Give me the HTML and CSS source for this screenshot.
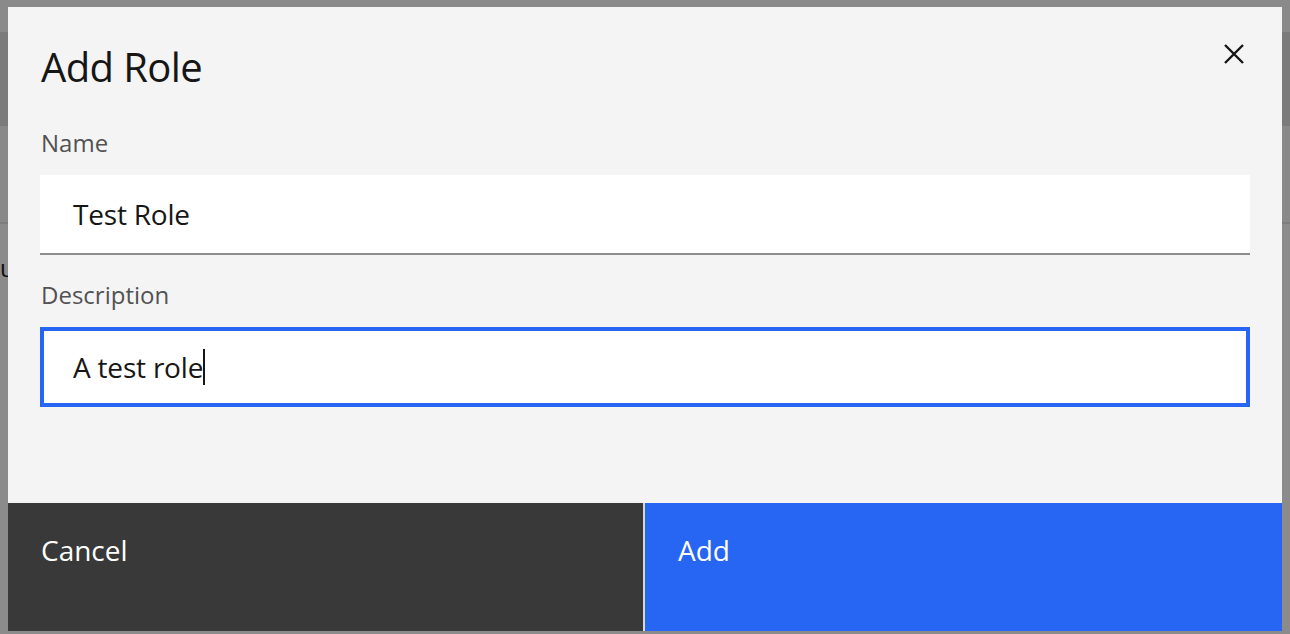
FILE: index.html
```html
<!DOCTYPE html>
<html lang="en">
<head>
<meta charset="utf-8">
<title>Add Role</title>
<link rel="stylesheet" href="styles.css">
</head>
<body>
<div class="page">
  <div class="page-top"></div>
  <div class="page-header"></div>
  <div class="page-band"></div>
  <div class="page-rule"></div>
  <div class="page-body"><span class="page-text">u</span></div>
</div>

<div class="modal" role="dialog" aria-label="Add Role">
  <div class="modal-header">
    <h2 class="modal-title">Add Role</h2>
    <button class="modal-close" aria-label="Close">
      <svg width="20" height="20" viewBox="0 0 20 20"><path d="M1 1 L19 19 M19 1 L1 19" stroke="#161616" stroke-width="2.4" fill="none"/></svg>
    </button>
  </div>
  <div class="modal-content">
    <div class="form-item">
      <label class="label">Name</label>
      <div class="field">Test Role</div>
    </div>
    <div class="form-item">
      <label class="label">Description</label>
      <div class="field field-focus">A test role<span class="caret"></span></div>
    </div>
  </div>
  <div class="modal-footer">
    <button class="btn btn-secondary">Cancel</button>
    <button class="btn btn-primary">Add</button>
  </div>
</div>
</body>
</html>
```

FILE: styles.css
```css
* { box-sizing: border-box; }
html, body { margin: 0; padding: 0; }
body {
  width: 1290px;
  height: 634px;
  overflow: hidden;
  background: #8b8b8b;
  font-family: "Open Sans", "Noto Sans", sans-serif;
  position: relative;
}
.page { display: flex; flex-direction: column; }
.page-top { height: 32px; background: #8a8a8a; }
.page-header { height: 94px; background: #7b7b7b; }
.page-band { height: 96px; background: #898989; }
.page-rule { height: 2px; background: #7d7d7d; }
.page-body { height: 390px; background: #8b8b8b; padding-top: 28px; }
.page-text { display: block; margin-left: 0; font-size: 24px; line-height: 32px; color: #0c0c0c; }

.modal {
  position: absolute;
  left: 8px;
  top: 7px;
  width: 1274px;
  height: 624px;
  background: #f4f4f4;
  display: flex;
  flex-direction: column;
}
.modal-header {
  display: flex;
  justify-content: space-between;
  align-items: flex-start;
  padding: 32px 32px 0 33px;
  margin-bottom: 32px;
}
.modal-title {
  margin: 0;
  font-size: 40px;
  line-height: 56px;
  font-weight: 400;
  color: #161616;
  letter-spacing: -0.6px;
}
.modal-close {
  border: 0;
  background: none;
  padding: 0;
  width: 20px;
  height: 20px;
  margin-top: 5px;
  margin-right: 6px;
  display: flex;
}
.modal-content { padding: 0 32px; }
.form-item { display: flex; flex-direction: column; margin-bottom: 24px; }
.label {
  font-size: 24px;
  line-height: 32px;
  color: #525252;
  letter-spacing: 0;
  margin: 0 0 16px 1px;
}
.field {
  height: 80px;
  background: #ffffff;
  border-bottom: 2px solid #8d8d8d;
  padding: 0 33px;
  display: flex;
  align-items: center;
  font-size: 28px;
  color: #161616;
  letter-spacing: -0.2px;
}
.field-focus {
  border: 4px solid #2765f3;
  padding-left: 29px;
}
.caret {
  display: inline-block;
  width: 2px;
  height: 36px;
  background: #161616;
  margin-left: 0;
}
.modal-footer {
  margin-top: auto;
  display: grid;
  grid-template-columns: 635px 1fr;
  column-gap: 2px;
  background: #d8d8d8;
  height: 128px;
}
.btn {
  border: 0;
  margin: 0;
  text-align: left;
  padding: 29px 32px 0 33px;
  font-family: inherit;
  font-size: 28px;
  line-height: 36px;
  letter-spacing: 0;
  color: #ffffff;
  display: flex;
  align-items: flex-start;
}
.btn-secondary { background: #393939; }
.btn-primary { background: #2765f3; }
```
